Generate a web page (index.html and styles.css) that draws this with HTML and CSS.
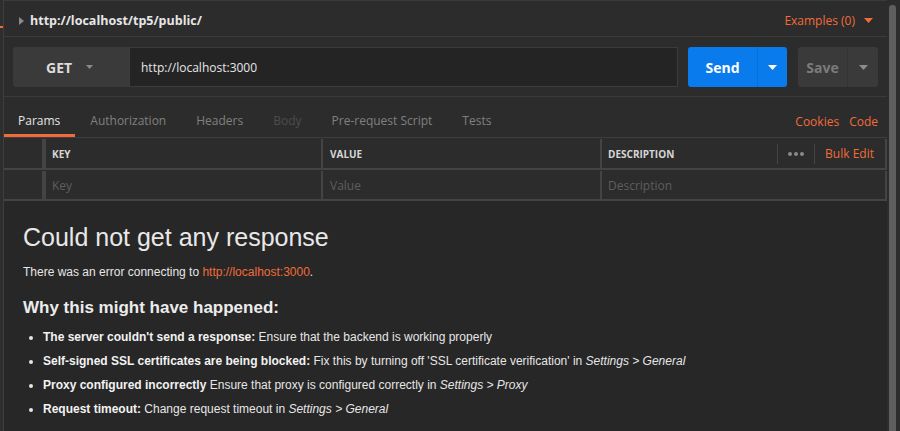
FILE: index.html
```html
<!DOCTYPE html>
<html>
<head>
<meta charset="utf-8">
<link rel="stylesheet" href="styles.css">
</head>
<body>
<div class="app">
  <div class="side"><span class="side-mark"></span></div>
  <div class="main">
    <div class="title-row">
      <div class="title-left">
        <svg class="tri-right" width="5" height="8" viewBox="0 0 5 8"><path d="M0 0 L5 4 L0 8 Z" fill="#8a8a8a"/></svg>
        <span class="req-name">http://localhost/tp5/public/</span>
      </div>
      <div class="examples">Examples (0)
        <svg width="9" height="5" viewBox="0 0 9 5"><path d="M0 0 H9 L4.5 5 Z" fill="#f26b3a"/></svg>
      </div>
    </div>

    <div class="url-row">
      <div class="method">GET
        <svg width="7" height="4" viewBox="0 0 7 4"><path d="M0 0 H7 L3.5 4 Z" fill="#8a8a8a"/></svg>
      </div>
      <div class="url-input">http://localhost:3000</div>
      <div class="send">
        <span class="send-label">Send</span>
        <span class="send-caret"><svg width="9" height="5" viewBox="0 0 9 5"><path d="M0 0 H9 L4.5 5 Z" fill="#ffffff"/></svg></span>
      </div>
      <div class="save">
        <span class="save-label">Save</span>
        <span class="save-caret"><svg width="9" height="5" viewBox="0 0 9 5"><path d="M0 0 H9 L4.5 5 Z" fill="#8c8c8c"/></svg></span>
      </div>
    </div>

    <div class="tabs">
      <div class="tab-list">
        <span class="tab active">Params</span>
        <span class="tab">Authorization</span>
        <span class="tab">Headers</span>
        <span class="tab disabled">Body</span>
        <span class="tab">Pre-request Script</span>
        <span class="tab">Tests</span>
      </div>
      <div class="tab-links">
        <span class="link">Cookies</span>
        <span class="link">Code</span>
      </div>
    </div>

    <div class="params">
      <div class="prow head">
        <div class="c0"></div>
        <div class="handle"></div>
        <div class="c1">KEY</div>
        <div class="c2">VALUE</div>
        <div class="c3">
          <span>DESCRIPTION</span>
          <div class="c3-tools">
            <span class="vsep"></span>
            <span class="dots"><i></i><i></i><i></i></span>
            <span class="vsep"></span>
            <span class="bulk">Bulk Edit</span>
          </div>
        </div>
      </div>
      <div class="prow body">
        <div class="c0"></div>
        <div class="handle"></div>
        <div class="c1 ph">Key</div>
        <div class="c2 ph">Value</div>
        <div class="c3 ph">Description</div>
      </div>
    </div>

    <div class="response">
      <h1 class="err-title">Could not get any response</h1>
      <p class="err-text">There was an error connecting to <span class="err-link">http://localhost:3000</span>.</p>
      <h2 class="why">Why this might have happened:</h2>
      <ul class="reasons">
        <li><b>The server couldn't send a response:</b> Ensure that the backend is working properly</li>
        <li><b>Self-signed SSL certificates are being blocked:</b> Fix this by turning off 'SSL certificate verification' in <i>Settings &gt; General</i></li>
        <li><b>Proxy configured incorrectly</b> Ensure that proxy is configured correctly in <i>Settings &gt; Proxy</i></li>
        <li><b>Request timeout:</b> Change request timeout in <i>Settings &gt; General</i></li>
      </ul>
    </div>
  </div>
  <div class="scroll"><div class="thumb"></div></div>
</div>
</body>
</html>
```

FILE: styles.css
```css
* { box-sizing: border-box; }
html, body { margin: 0; height: 100%; }
body {
  background: #2c2c2c;
  font-family: "Open Sans", "Noto Sans", sans-serif;
  color: #e0e0e0;
  overflow: hidden;
}
.app {
  display: flex;
  height: 431px;
}
.side {
  width: 4px;
  flex: none;
  background: #2e2e2e;
  border-right: 1px solid #3e3e3e;
  padding-top: 26px;
}
.side-mark {
  display: block;
  width: 3px;
  height: 2px;
  background: #f26b3a;
}
.main {
  flex: 1;
  display: flex;
  flex-direction: column;
  min-width: 0;
}
.scroll {
  width: 13px;
  flex: none;
  padding: 5px 4px 0 2px;
  background: #2c2c2c;
}
.thumb {
  height: 100%;
  background: #5e5e5e;
  border-radius: 3px 3px 0 0;
}

/* title row */
.title-row {
  height: 37px;
  border-top: 1px solid #3a3a3a;
  border-bottom: 1px solid #3a3a3a;
  display: flex;
  align-items: center;
  justify-content: space-between;
  padding: 3px 14px 0 15px;
}
.title-left { display: flex; align-items: center; gap: 6px; }
.tri-right { margin-top: 1px; }
.req-name {
  font-weight: 700;
  font-size: 12.5px;
  color: #e6e6e6;
}
.examples {
  color: #f26b3a;
  font-size: 12px;
  display: flex;
  align-items: center;
  gap: 9px;
}

/* url row */
.url-row {
  display: flex;
  padding: 10px 9px 0 9px;
  height: 60px;
  border-bottom: 1px solid #3a3a3a;
}
.method {
  width: 116px;
  height: 40px;
  background: #3a3a3a;
  border-radius: 3px 0 0 3px;
  display: flex;
  align-items: center;
  gap: 14px;
  padding-left: 33px;
  font-weight: 700;
  font-size: 14px;
  color: #dcdcdc;
}
.url-input {
  flex: 1;
  height: 40px;
  background: #242424;
  border: 1px solid #3c3c3c;
  display: flex;
  align-items: center;
  padding-left: 11px;
  font-size: 12px;
  color: #e6e6e6;
}
.send {
  margin-left: 10px;
  width: 99px;
  height: 40px;
  background: #097bed;
  border-radius: 3px;
  display: flex;
}
.send-label {
  width: 70px;
  display: flex;
  align-items: center;
  justify-content: center;
  font-weight: 700;
  font-size: 14px;
  color: #ffffff;
  border-right: 1px solid #0a6fd4;
}
.send-caret, .save-caret {
  flex: 1;
  display: flex;
  align-items: center;
  justify-content: center;
}
.save {
  margin-left: 11px;
  width: 80px;
  height: 40px;
  background: #3a3a3a;
  border-radius: 3px;
  display: flex;
}
.save-label {
  width: 50px;
  display: flex;
  align-items: center;
  justify-content: center;
  font-weight: 700;
  font-size: 14px;
  color: #7b7b7b;
  border-right: 1px solid #333333;
}

/* tabs */
.tabs {
  height: 40px;
  display: flex;
  justify-content: space-between;
  padding-right: 9px;
}
.tab-list { display: flex; }
.tab {
  font-size: 12px;
  color: #808080;
  padding: 15px 15px 0;
  height: 40px;
  border-bottom: 3px solid transparent;
}
.tab:first-child { padding-left: 14px; }
.tab.active {
  color: #e6e6e6;
  border-bottom-color: #f26b3a;
}
.tab.disabled { color: #4d4d4d; }
.tab-links {
  display: flex;
  gap: 10px;
  padding-top: 16px;
  font-size: 12px;
}
.link { color: #f26b3a; }

/* params table */
.params {
  border-top: 1px solid #3e3e3e;
}
.prow {
  display: flex;
  border-bottom: 2px solid #444444;
}
.prow.head { height: 32px; padding-top: 1px; }
.prow.body { height: 31px; padding-top: 1px; }
.c0 { width: 38px; flex: none; }
.handle { width: 4px; flex: none; background: #444444; }
.c1, .c2, .c3 {
  display: flex;
  align-items: center;
  padding-left: 6px;
  font-size: 10px;
  font-weight: 700;
  color: #d6d6d6;
}
.c1 { width: 277px; border-right: 2px solid #444444; }
.c2 { width: 279px; border-right: 2px solid #444444; padding-left: 7px; }
.c3 { flex: 1; border-right: 2px solid #444444; justify-content: space-between; padding-right: 11px; }
.ph { font-weight: 400; font-size: 12px; color: #5e5e5e; }
.c3-tools { display: flex; align-items: center; gap: 10px; }
.vsep { width: 1px; height: 20px; background: #444444; }
.dots { display: flex; gap: 2px; }
.dots i { width: 4px; height: 4px; border-radius: 50%; background: #8a8a8a; display: block; }
.bulk { color: #f26b3a; font-weight: 400; font-size: 12px; }

/* response */
.response {
  flex: 1;
  background: #272727;
  padding: 21px 19px 0;
  font-family: "Liberation Sans", Arial, sans-serif;
}
.err-title {
  margin: 0;
  font-weight: 400;
  font-size: 25px;
  line-height: 30px;
  color: #e8e8e8;
}
.err-text {
  margin: 12px 0 0;
  font-size: 12px;
  line-height: 16px;
  color: #e6e6e6;
}
.err-link { color: #f26b3a; }
.why {
  margin: 17px 0 0;
  font-size: 17px;
  line-height: 22px;
  color: #ececec;
}
.reasons {
  margin: 10px 0 0;
  padding-left: 20px;
  font-size: 12px;
  line-height: 16px;
  color: #e6e6e6;
}
.reasons li { margin-bottom: 8px; }
.reasons b { color: #f2f2f2; }
```
